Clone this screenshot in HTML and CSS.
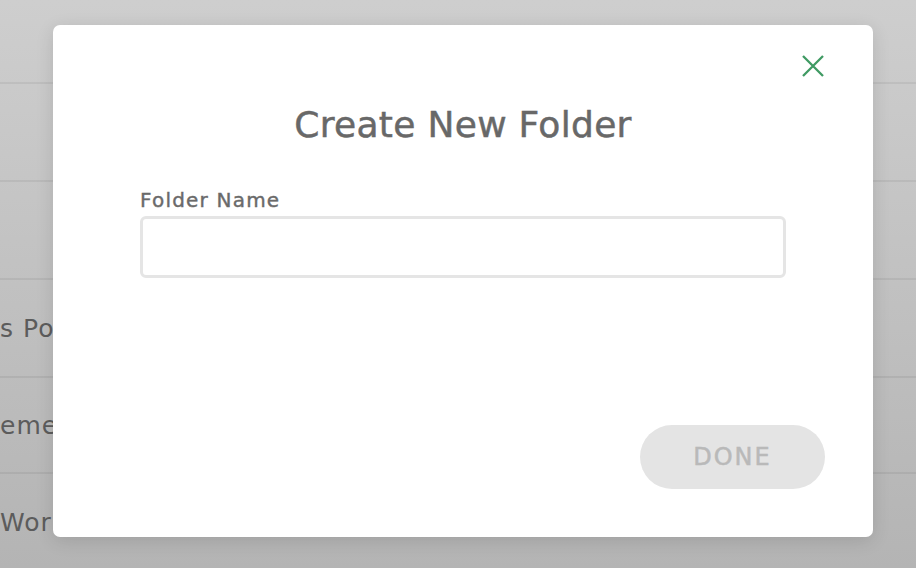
FILE: index.html
```html
<!DOCTYPE html>
<html lang="en">
<head>
    <meta charset="UTF-8">
    <title>Create New Folder</title>

    <link rel="stylesheet" href="styles.css">

</head>
<body>

<div class="list">
    <div class="row"></div>
    <div class="row"></div>
    <div class="row"></div>
    <div class="row"><span class="name">s Posts</span></div>
    <div class="row short"><span class="name">ements</span></div>
    <div class="row"><span class="name">Work</span></div>
</div>

<div class="modal">
    <button class="close" aria-label="Close">
        <svg width="22" height="22" viewBox="0 0 22 22">
            <path d="M1 1 L21 21 M21 1 L1 21" stroke="#3f9a63" stroke-width="2.3" fill="none"/>
        </svg>
    </button>

    <h2 class="title">Create New Folder</h2>

    <div class="field">
        <label for="folder">Folder Name</label>
        <input id="folder" type="text">
    </div>

    <div class="actions">
        <button class="done" disabled>DONE</button>
    </div>
</div>

</body>
</html>
```

FILE: styles.css
```css
* {
    box-sizing: border-box;
}

body {
    margin: 0;
    height: 568px;
    overflow: hidden;
    font-family: "DejaVu Sans", sans-serif;
    background: linear-gradient(#cecece, #b4b4b4);
}

.list .row {
    height: 98px;
    border-bottom: 2px solid rgba(0, 0, 0, 0.06);
    display: flex;
    align-items: center;
    overflow: hidden;
}

.list .row:first-child {
    height: 84px;
}

.list .row.short {
    height: 96px;
}

.list .name {
    font-size: 25px;
    color: #5c5c5c;
    white-space: nowrap;
    letter-spacing: 1px;
}

.modal {
    position: absolute;
    left: 53px;
    top: 25px;
    width: 820px;
    height: 512px;
    background: #fff;
    border-radius: 7px;
    box-shadow: 0 4px 18px rgba(0, 0, 0, 0.12);
    padding: 84px 87px 0;
}

.close {
    position: absolute;
    top: 30px;
    right: 49px;
    border: none;
    background: none;
    padding: 0;
    width: 22px;
    height: 22px;
    cursor: pointer;
}

.close svg {
    display: block;
}

.title {
    margin: 0;
    text-align: center;
    font-size: 36px;
    font-weight: normal;
    color: #686868;
    line-height: 32px;
    letter-spacing: 0.3px;
    -webkit-text-stroke: 0.5px #686868;
}

.field {
    margin-top: 49px;
}

.field label {
    display: block;
    font-size: 20px;
    color: #6a6a6a;
    line-height: 20px;
    letter-spacing: 1.2px;
    margin-bottom: 6px;
    -webkit-text-stroke: 0.4px #6a6a6a;
}

.field input {
    display: block;
    width: 100%;
    height: 62px;
    border: 3px solid #e5e5e5;
    border-radius: 6px;
    outline: none;
}

.actions {
    display: flex;
    justify-content: flex-end;
    margin-top: 147px;
    margin-right: -39px;
}

.done {
    width: 185px;
    height: 64px;
    border: none;
    border-radius: 32px;
    background: #e4e4e4;
    color: #b9b9b9;
    font-family: "DejaVu Sans", sans-serif;
    font-size: 24px;
    letter-spacing: 2px;
    -webkit-text-stroke: 0.5px #b9b9b9;
}
```
